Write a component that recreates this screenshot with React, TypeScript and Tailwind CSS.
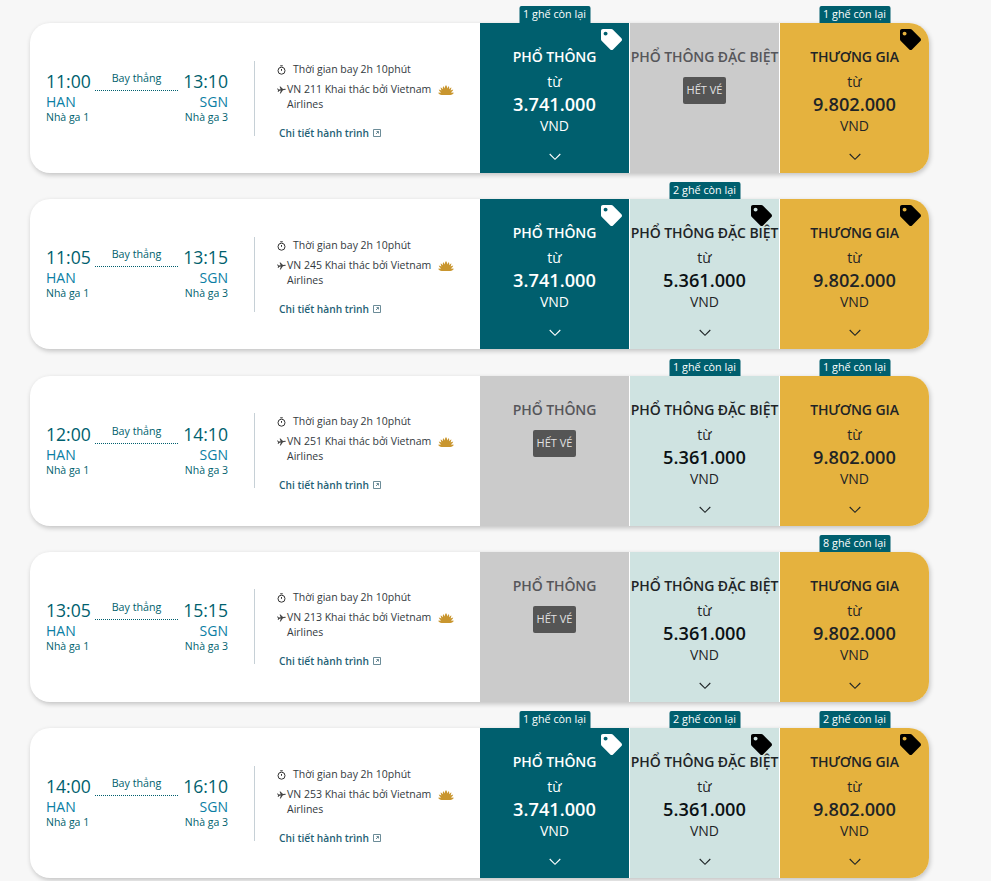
import React from "react";
import { FaTag } from "react-icons/fa";

type Fare = { kind: "eco" | "special" | "biz"; price?: string; seats?: string; tag?: boolean };
type Flight = { dep: string; arr: string; no: string; fares: Fare[] };

const P1 = "3.741.000";
const P2 = "5.361.000";
const P3 = "9.802.000";

const flights: Flight[] = [
  { dep: "11:00", arr: "13:10", no: "VN 211", fares: [
    { kind: "eco", price: P1, seats: "1 ghế còn lại", tag: true },
    { kind: "special" },
    { kind: "biz", price: P3, seats: "1 ghế còn lại", tag: true },
  ] },
  { dep: "11:05", arr: "13:15", no: "VN 245", fares: [
    { kind: "eco", price: P1, tag: true },
    { kind: "special", price: P2, seats: "2 ghế còn lại", tag: true },
    { kind: "biz", price: P3, tag: true },
  ] },
  { dep: "12:00", arr: "14:10", no: "VN 251", fares: [
    { kind: "eco" },
    { kind: "special", price: P2, seats: "1 ghế còn lại" },
    { kind: "biz", price: P3, seats: "1 ghế còn lại" },
  ] },
  { dep: "13:05", arr: "15:15", no: "VN 213", fares: [
    { kind: "eco" },
    { kind: "special", price: P2 },
    { kind: "biz", price: P3, seats: "8 ghế còn lại" },
  ] },
  { dep: "14:00", arr: "16:10", no: "VN 253", fares: [
    { kind: "eco", price: P1, seats: "1 ghế còn lại", tag: true },
    { kind: "special", price: P2, seats: "2 ghế còn lại", tag: true },
    { kind: "biz", price: P3, seats: "2 ghế còn lại", tag: true },
  ] },
];

const titles = { eco: "PHỔ THÔNG", special: "PHỔ THÔNG ĐẶC BIỆT", biz: "THƯƠNG GIA" };

function Clock() {
  return (
    <svg width="9" height="10" viewBox="0 0 9 10" fill="none" stroke="#333" strokeWidth="1">
      <circle cx="4.500" cy="5.700" r="3.500" />
      <path d="M3.200 .8h2.600M4.500 4v1.800" />
    </svg>
  );
}

function Plane() {
  return (
    <svg width="9" height="8" viewBox="0 0 9 8" fill="#444">
      <path d="M0 2.400l.9 0 .9 1 1.800-.2L2.600.6h.9l2.500 2.500 2.200-.3c.7 0 .9.700.2.900l-2.500.6L3.700 7.500h-.9l1.100-2.900-1.800.3-.8 1-.6 0 .4-1.500z" />
    </svg>
  );
}

function Lotus() {
  return (
    <svg width="16" height="10" viewBox="0 0 16 10" fill="#c9962f">
      <path d="M8 0c.9 1.200 1.300 2.300 1.200 3.600L10.800 1c.5 1.200.5 2.200.2 3.300l2.300-2c.1 1.300-.2 2.300-.8 3.200l2.700-1c-.4 1.300-1.200 2.200-2.300 2.900L16 7.800c-.8 1.200-2 2.200-3.700 2.200H3.700C2 10 .8 9 0 7.800l3.100-.4C2 6.700 1.200 5.800.8 4.500l2.700 1c-.6-.9-.9-1.900-.8-3.200l2.300 2c-.3-1.100-.3-2.100.2-3.300l1.600 2.600C6.700 2.300 7.100 1.200 8 0z" />
    </svg>
  );
}

function ExternalLink() {
  return (
    <svg width="8" height="8" viewBox="0 0 8 8" fill="none" stroke="#5b7f8c" strokeWidth="0.9">
      <path d="M.5.5h7v7h-7zM3 5l2.500-2.500M3.500 2.500h2v2" />
    </svg>
  );
}

function Chevron({ color }: { color: string }) {
  return (
    <svg width="12" height="8" viewBox="0 0 12 8" fill="none" stroke={color} strokeWidth="1.100">
      <path d="M.7 1l5.300 5.300L11.300 1" />
    </svg>
  );
}

function FareCell({ fare, last }: { fare: Fare; last?: boolean }) {
  const soldOut = !fare.price;
  const bg = soldOut
    ? "bg-[#cbcbcb]"
    : fare.kind === "eco"
      ? "bg-[#005f6e]"
      : fare.kind === "special"
        ? "bg-[#cfe3e1]"
        : "bg-[#e5b23e]";
  const text = soldOut ? "text-[#56565a]" : fare.kind === "eco" ? "text-white" : "text-[#1e2426]";
  const priceText = fare.kind === "special" ? "text-[#0b1114]" : text;
  return (
    <div className={`relative shrink-0 ${bg} ${text} ${last ? "w-[149px] rounded-r-[20px]" : "w-[150px] border-r border-white"}`}>
      {fare.seats && (
        <div className="absolute left-1/2 top-[-17px] h-[17px] w-[71px] -translate-x-1/2 whitespace-nowrap rounded-t-[2px] bg-[#005f6e] text-center text-[10.800px] leading-[15px] text-white">
          {fare.seats}
        </div>
      )}
      {fare.tag && (
        <FaTag
          className={`absolute top-[6px] ${last ? "right-[8px]" : "right-[7px]"} ${fare.kind === "eco" ? "text-white" : "text-black"}`}
          size={21}
        />
      )}
      <div className="flex h-full flex-col items-center pt-[23px]">
        <div className="h-[22px] whitespace-nowrap text-center text-[14px] font-semibold leading-[22px] tracking-[-0.1px]">
          {titles[fare.kind]}
        </div>
        {soldOut ? (
          <div className="mt-[9px] flex h-[27px] w-[43px] items-center justify-center rounded-[2px] bg-[#555555] text-[11px] text-[#e2e2e2]">
            HẾT VÉ
          </div>
        ) : (
          <>
            <div className="mt-[4px] h-[20px] text-[14px] leading-[20px]">từ</div>
            <div className={`mt-[-1px] h-[26px] text-[18.200px] font-semibold leading-[26px] ${priceText}`}>{fare.price}</div>
            <div className="mt-[-1px] h-[20px] text-[14px] leading-[20px]">VND</div>
            <div className="mt-[16px] flex h-[10px] items-center">
              <Chevron color={fare.kind === "eco" ? "#ffffff" : "#1e2426"} />
            </div>
          </>
        )}
      </div>
    </div>
  );
}

function FlightCard({ flight }: { flight: Flight }) {
  return (
    <div className="flex h-[150px] w-[899px] rounded-[20px] bg-white shadow-[1px_2px_5px_rgba(0,0,0,0.22)]">
      <div className="flex w-[450px] shrink-0 items-center pl-[16px]">
        <div className="w-[182px] shrink-0 pb-[2px]">
          <div className="flex items-end justify-between">
            <span className="text-[17.600px] leading-[24px] text-[#005f6e]">{flight.dep}</span>
            <div className="mb-[2px] mr-[1px] w-[83px] border-b border-dotted border-[#005f6e] pb-[3px] text-center text-[10.700px] leading-[18px] text-[#005f6e]">
              Bay thẳng
            </div>
            <span className="text-[17.600px] leading-[24px] text-[#005f6e]">{flight.arr}</span>
          </div>
          <div className="flex justify-between text-[14px] leading-[18px] text-[#0a7ea4]">
            <span>HAN</span>
            <span>SGN</span>
          </div>
          <div className="mt-[-1px] flex justify-between text-[10.500px] leading-[15px] text-[#005f6e]">
            <span>Nhà ga 1</span>
            <span>Nhà ga 3</span>
          </div>
        </div>
        <div className="ml-[26px] h-[75px] w-px shrink-0 bg-[#c6d0d6]" />
        <div className="ml-[24px] w-[180px] pt-[5px] text-[10.500px] text-[#333a3e]">
          <div className="ml-[-2px] flex items-center leading-[16px]">
            <span className="mr-[7px] mt-[2px] flex"><Clock /></span>
            <span>Thời gian bay 2h 10phút</span>
          </div>
          <div className="ml-[-2px] mt-[5px] flex items-start leading-[15px]">
            <span className="mr-[1px] mt-[4px] flex"><Plane /></span>
            <div className="w-[147px]">
              {flight.no} Khai thác bởi Vietnam Airlines
            </div>
            <span className="ml-[4px] mt-[3px] flex"><Lotus /></span>
          </div>
          <div className="mt-[13px] flex items-center leading-[16px]">
            <span className="text-[10.200px] font-semibold text-[#1f5f75]">Chi tiết hành trình</span>
            <span className="ml-[4px] flex"><ExternalLink /></span>
          </div>
        </div>
      </div>
      <FareCell fare={flight.fares[0]} />
      <FareCell fare={flight.fares[1]} />
      <FareCell fare={flight.fares[2]} last />
    </div>
  );
}

export default function App() {
  return (
    <div className="h-[881px] overflow-hidden bg-[#f7f7f7] pl-[30px] pt-[23px] font-['Open_Sans',sans-serif]">
      <div className="flex flex-col gap-[26.250px]">
        {flights.map((f) => (
          <FlightCard key={f.dep} flight={f} />
        ))}
      </div>
    </div>
  );
}
